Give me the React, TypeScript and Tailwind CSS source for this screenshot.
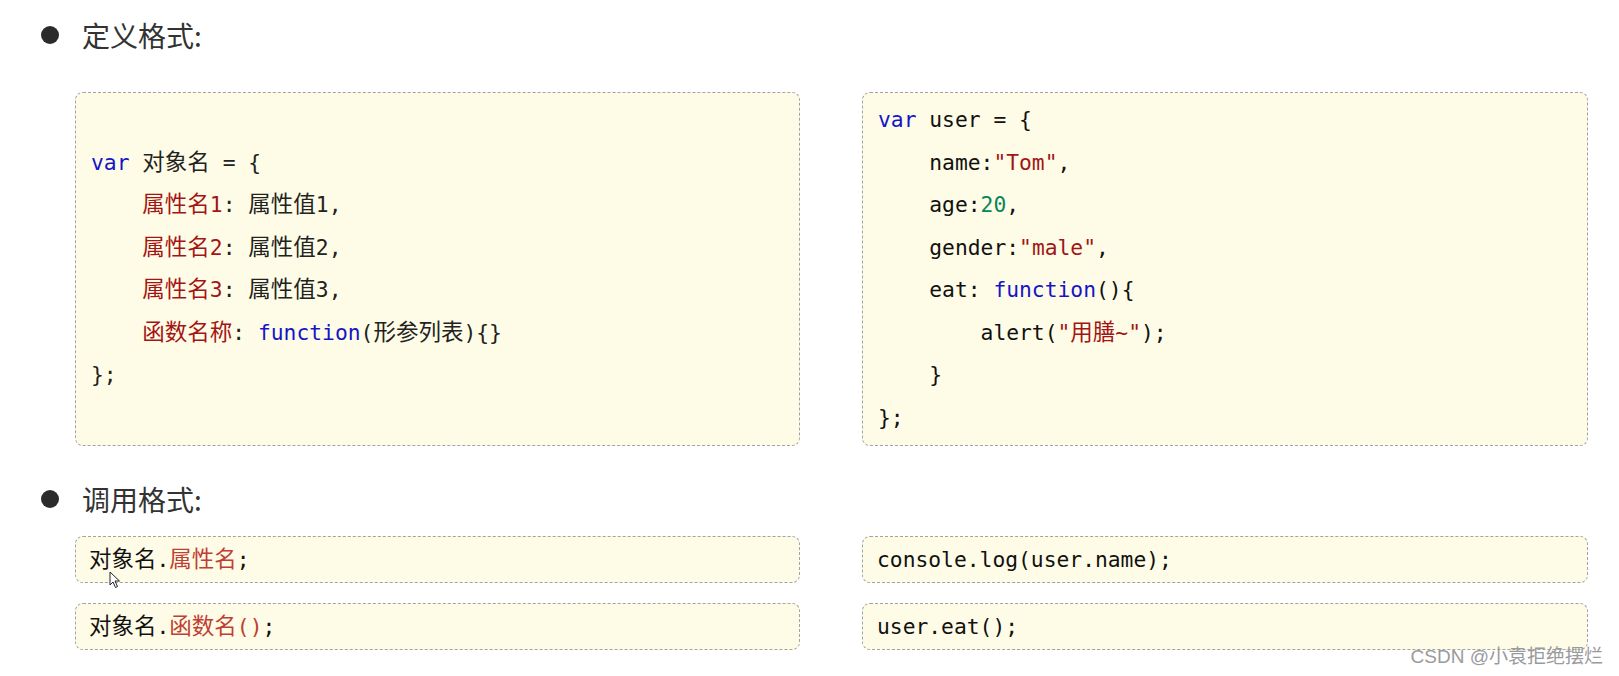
import React from 'react';

const mono = { fontFamily: '"DejaVu Sans Mono", "Noto Sans CJK SC", monospace' };

const C = ({ children }: { children: React.ReactNode }) => (
  <span className="text-[22.5px] leading-none [font-family:'Noto_Sans_CJK_SC',sans-serif]">{children}</span>
);
const B = ({ children }: { children: React.ReactNode }) => <span className="text-[#1515c8]">{children}</span>;
const R = ({ children }: { children: React.ReactNode }) => <span className="text-[#a31515]">{children}</span>;
const G = ({ children }: { children: React.ReactNode }) => <span className="text-[#098658]">{children}</span>;
const L = ({ children }: { children: React.ReactNode }) => <span className="text-[#bf3f33]">{children}</span>;

const Heading = ({ text }: { text: string }) => (
  <div className="flex items-center pl-[41px]">
    <span className="w-[18px] h-[18px] rounded-full bg-[#2b2b2b]" />
    <span className="ml-[23px] text-[28px] leading-[42px] text-[#333] [font-family:'Noto_Sans_CJK_SC',sans-serif]">
      {text}
    </span>
  </div>
);

const boxClass = 'bg-[#fefce6] border border-dashed border-[#a3a3a3] rounded-lg';

const App = () => {
  return (
    <div className="relative w-[1619px] h-[676px] bg-white overflow-hidden">
      <div className="pt-[14px]">
        <Heading text="定义格式:" />

        <div className="mt-[36px] ml-[75px] grid grid-cols-[725px_726px] gap-x-[62px]">
          <div
            className={`${boxClass} flex flex-col justify-center px-[15px] text-[21.3px] leading-[42.5px] text-[#222] whitespace-pre`}
            style={mono}
          >
            <div>
              <B>var</B> <C>对象名</C> = {'{'}
            </div>
            <div>
              {'    '}
              <R>
                <C>属性名</C>1
              </R>
              : <C>属性值</C>1,
            </div>
            <div>
              {'    '}
              <R>
                <C>属性名</C>2
              </R>
              : <C>属性值</C>2,
            </div>
            <div>
              {'    '}
              <R>
                <C>属性名</C>3
              </R>
              : <C>属性值</C>3,
            </div>
            <div>
              {'    '}
              <R>
                <C>函数名称</C>
              </R>
              : <B>function</B>(<C>形参列表</C>){'{}'}
            </div>
            <div>{'};'}</div>
          </div>

          <div
            className={`${boxClass} py-[6px] px-[15px] text-[21.3px] leading-[42.5px] text-[#111] whitespace-pre`}
            style={mono}
          >
            <div>
              <B>var</B> user = {'{'}
            </div>
            <div>
              {'    '}name:<R>"Tom"</R>,
            </div>
            <div>
              {'    '}age:<G>20</G>,
            </div>
            <div>
              {'    '}gender:<R>"male"</R>,
            </div>
            <div>
              {'    '}eat: <B>function</B>(){'{'}
            </div>
            <div>
              {'        '}alert(<R>"<C>用膳</C>~"</R>);
            </div>
            <div>{'    }'}</div>
            <div>{'};'}</div>
          </div>
        </div>

        <div className="mt-[32px]">
          <Heading text="调用格式:" />
        </div>

        <div
          className="mt-[16px] ml-[75px] grid grid-cols-[725px_726px] gap-x-[62px] gap-y-[20px] text-[21.3px] leading-[45px] text-[#111]"
          style={mono}
        >
          <div className={`${boxClass} h-[47px] pl-[13px] whitespace-pre`}>
            <C>对象名</C>.
            <L>
              <C>属性名</C>
            </L>
            ;
          </div>
          <div className={`${boxClass} h-[47px] pl-[14px] whitespace-pre`}>console.log(user.name);</div>
          <div className={`${boxClass} h-[47px] pl-[13px] whitespace-pre`}>
            <C>对象名</C>.
            <L>
              <C>函数名</C>()
            </L>
            ;
          </div>
          <div className={`${boxClass} h-[47px] pl-[14px] whitespace-pre`}>user.eat();</div>
        </div>
      </div>

      <svg className="absolute left-[109px] top-[571px]" width="12" height="18" viewBox="0 0 12 18">
        <path d="M1 1 L1 14 L4 11 L6.5 16.5 L8.5 15.5 L6 10 L10.5 10 Z" fill="#fff" stroke="#222" strokeWidth="1" />
      </svg>

      <div className="absolute right-[16px] top-[645px] text-[19px] leading-[24px] text-[#9a9a9a] [font-family:'Liberation_Sans','Noto_Sans_CJK_SC',sans-serif]">
        CSDN @小袁拒绝摆烂
      </div>
    </div>
  );
};

export default App;
